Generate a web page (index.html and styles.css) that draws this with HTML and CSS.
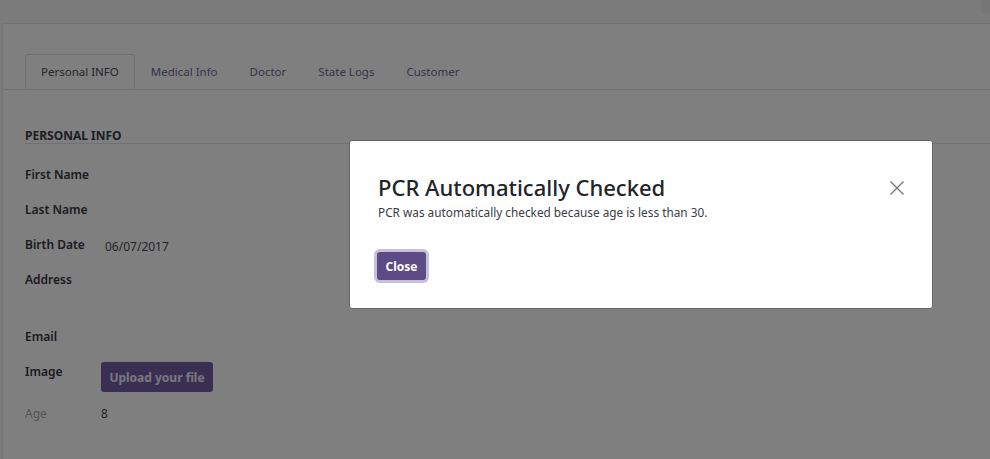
FILE: index.html
```html
<!DOCTYPE html>
<html>
<head>
<meta charset="utf-8">
<link rel="stylesheet" href="styles.css">
</head>
<body>
<div class="topbar"><div class="scrollthumb"></div></div>
<div class="sheet">
  <div class="tabs">
    <div class="tab active">Personal INFO</div>
    <div class="tab">Medical Info</div>
    <div class="tab">Doctor</div>
    <div class="tab">State Logs</div>
    <div class="tab">Customer</div>
  </div>
  <div class="content">
    <div class="section-title">PERSONAL INFO</div>
    <div class="fields">
      <div class="row"><div class="label">First Name</div><div class="value"></div></div>
      <div class="row"><div class="label">Last Name</div><div class="value"></div></div>
      <div class="row"><div class="label">Birth Date</div><div class="value date">06/07/2017</div></div>
      <div class="row tall"><div class="label">Address</div><div class="value"></div></div>
      <div class="row"><div class="label">Email</div><div class="value"></div></div>
      <div class="row img"><div class="label">Image</div><div class="value"><button class="upload">Upload your file</button></div></div>
      <div class="row age"><div class="label muted">Age</div><div class="value num">8</div></div>
    </div>
  </div>
</div>
<div class="overlay"></div>
<div class="modal">
  <div class="modal-head">
    <h1 class="modal-title">PCR Automatically Checked</h1>
    <svg class="close-x" width="16" height="16" viewBox="0 0 16 16"><path d="M1.5 1.5 L14.5 14.5 M14.5 1.5 L1.5 14.5" stroke="#777" stroke-width="1.4" fill="none"/></svg>
  </div>
  <p class="modal-body">PCR was automatically checked because age is less than 30.</p>
  <button class="btn-close">Close</button>
</div>
</body>
</html>
```

FILE: styles.css
```css
html, body {
  margin: 0;
  padding: 0;
  height: 100%;
  overflow: hidden;
}
body {
  background: #f6f6f6;
  font-family: "Noto Sans", "Open Sans", sans-serif;
  font-size: 13px;
  color: #3a3c48;
}
.topbar {
  height: 23px;
  position: relative;
}
.scrollthumb {
  position: absolute;
  right: 0;
  top: 0;
  width: 9px;
  height: 14px;
  background: #ececec;
  border-bottom-left-radius: 3px;
}
.sheet {
  margin-left: 2px;
  background: #fff;
  border-top: 1px solid #e8e8e8;
  border-left: 1px solid #e8e8e8;
  height: 436px;
  padding-top: 30px;
  box-sizing: border-box;
}
.tabs {
  display: flex;
  padding-left: 22px;
  border-bottom: 1px solid #e2e2e2;
  height: 35px;
  font-size: 11.5px;
}
.tab {
  padding: 0 15px;
  line-height: 33px;
  color: #6e6891;
  border: 1px solid transparent;
  border-bottom: none;
}
.tab.active {
  border-color: #e2e2e2;
  border-radius: 3px 3px 0 0;
  background: #fff;
  color: #4c4c58;
  height: 35px;
  box-sizing: border-box;
  margin-bottom: -1px;
}
.content {
  padding-left: 22px;
  padding-top: 39px;
}
.section-title {
  font-weight: bold;
  font-size: 12px;
  color: #3a3c48;
  border-bottom: 1px solid #e2e2e2;
  padding-bottom: 0;
  line-height: 14px;
}
.fields {
  padding-top: 21px;
}
.row {
  display: flex;
  height: 35px;
  align-items: flex-start;
}
.row.tall { height: 57px; }
.row.img { height: 42px; }
.label {
  width: 76px;
  font-weight: 600;
  font-size: 12px;
  line-height: 20px;
  color: #36363f;
}
.label.muted {
  font-weight: normal;
  color: #aaaaaa;
}
.value.date {
  padding-left: 4px;
  padding-top: 2px;
  line-height: 20px;
  font-size: 12px;
  color: #4a4a52;
}
.value.num {
  line-height: 20px;
  font-size: 12px;
  color: #4a4a52;
}
.upload {
  margin-top: 0;
  height: 30px;
  width: 112px;
  border: none;
  border-radius: 3px;
  background: #745ea4;
  color: #f0f0fa;
  font-family: "Noto Sans", sans-serif;
  font-weight: 700;
  font-size: 12px;
  padding: 0;
}
.overlay {
  position: fixed;
  inset: 0;
  background: rgba(0, 0, 0, 0.5);
}
.modal {
  position: fixed;
  left: 349px;
  top: 140px;
  width: 584px;
  height: 169px;
  box-sizing: border-box;
  background: #fff;
  border: 1px solid #666;
  border-radius: 3px;
  padding: 32px 28px 0 28px;
}
.modal-head {
  display: flex;
  justify-content: space-between;
  align-items: flex-start;
}
.modal-title {
  margin: 0;
  font-size: 22px;
  font-weight: 500;
  line-height: 28px;
  color: #212529;
}
.close-x {
  margin-top: 7px;
  margin-right: -1px;
}
.modal-body {
  margin: 3px 0 0 0;
  font-size: 11.8px;
  line-height: 16px;
  color: #3a3c44;
}
.btn-close {
  margin-top: 32px;
  margin-left: -1px;
  width: 49px;
  height: 28px;
  border: none;
  border-radius: 3px;
  background: #5c4b84;
  color: #fff;
  font-family: "Noto Sans", sans-serif;
  font-weight: 700;
  font-size: 12px;
  box-shadow: 0 0 0 3px #c8bfdc;
  padding: 0;
}
```
